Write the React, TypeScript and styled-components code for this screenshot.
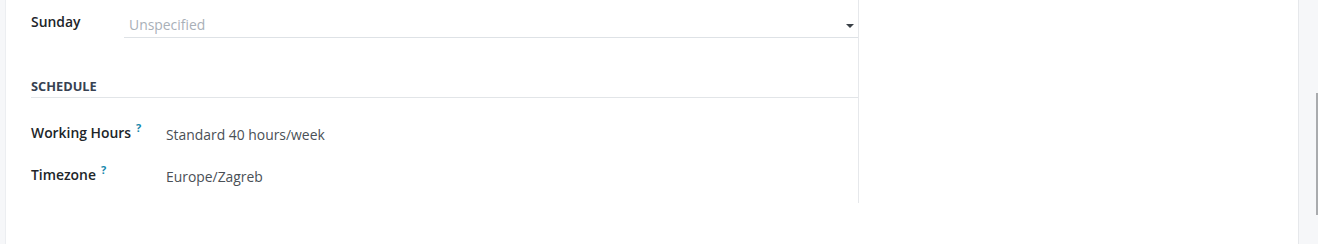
import React from "react";
import styled, { createGlobalStyle } from "styled-components";

const Global = createGlobalStyle`
  html, body { margin: 0; padding: 0; background: #ffffff; }
  body { font-family: "Open Sans", "Noto Sans", sans-serif; }
`;

const Page = styled.div`
  display: flex;
  width: 1318px;
  height: 244px;
  overflow: hidden;
`;

const LeftRail = styled.div`
  width: 5px;
  background: #f6f7f9;
  border-right: 1px solid #eceef1;
`;

const Main = styled.div`
  flex: 1;
  background: #ffffff;
  display: flex;
`;

const Sheet = styled.div`
  width: 853px;
  height: 203px;
  border-right: 1px solid #e6e8eb;
  padding-left: 25px;
  box-sizing: border-box;
`;

const RightRail = styled.div`
  width: 19px;
  background: #f6f7f9;
  border-left: 1px solid #e6e8eb;
  display: flex;
  justify-content: flex-end;
`;

const Thumb = styled.div`
  width: 2px;
  height: 122px;
  margin-top: 93px;
  background: #a9abae;
`;

const FieldRow = styled.div<{ $top: number }>`
  display: flex;
  align-items: flex-start;
  margin-top: ${(p) => p.$top}px;
`;

const Label = styled.div<{ $w: number }>`
  width: ${(p) => p.$w}px;
  flex: none;
  font-size: 13.9px;
  font-weight: 600;
  color: #212529;
  line-height: 20px;
`;

const Help = styled.sup`
  color: #1789ad;
  font-size: 11px;
  font-weight: 700;
  margin-left: 5px;
  vertical-align: 6px;
  line-height: 0;
`;

const Select = styled.div`
  flex: 1;
  display: flex;
  align-items: center;
  justify-content: space-between;
  border-bottom: 1px solid #dee2e6;
  height: 24px;
  padding-left: 5px;
  padding-right: 4px;
  margin-top: 1px;
`;

const Placeholder = styled.span`
  font-size: 13.9px;
  color: #a9b0b8;
  line-height: 20px;
  margin-top: -1px;
`;

const Caret = styled.span`
  width: 0;
  height: 0;
  border-left: 4px solid transparent;
  border-right: 4px solid transparent;
  border-top: 4px solid #3a4047;
  margin-top: 2px;
`;

const SectionTitle = styled.div`
  margin-top: 39px;
  font-size: 12.8px;
  font-weight: 700;
  color: #374151;
  line-height: 18px;
  padding-bottom: 2px;
  border-bottom: 1px solid #e2e5e8;
`;

const Value = styled.div`
  font-size: 13.9px;
  color: #4a5056;
  line-height: 20px;
  margin-top: 2px;
`;

export default function App() {
  return (
    <Page>
      <Global />
      <LeftRail />
      <Main>
        <Sheet>
          <FieldRow $top={12}>
            <Label $w={93}>Sunday</Label>
            <Select>
              <Placeholder>Unspecified</Placeholder>
              <Caret />
            </Select>
          </FieldRow>
          <SectionTitle>SCHEDULE</SectionTitle>
          <FieldRow $top={25}>
            <Label $w={135}>
              Working Hours<Help>?</Help>
            </Label>
            <Value>Standard 40 hours/week</Value>
          </FieldRow>
          <FieldRow $top={20}>
            <Label $w={135}>
              Timezone<Help>?</Help>
            </Label>
            <Value>Europe/Zagreb</Value>
          </FieldRow>
        </Sheet>
      </Main>
      <RightRail>
        <Thumb />
      </RightRail>
    </Page>
  );
}
